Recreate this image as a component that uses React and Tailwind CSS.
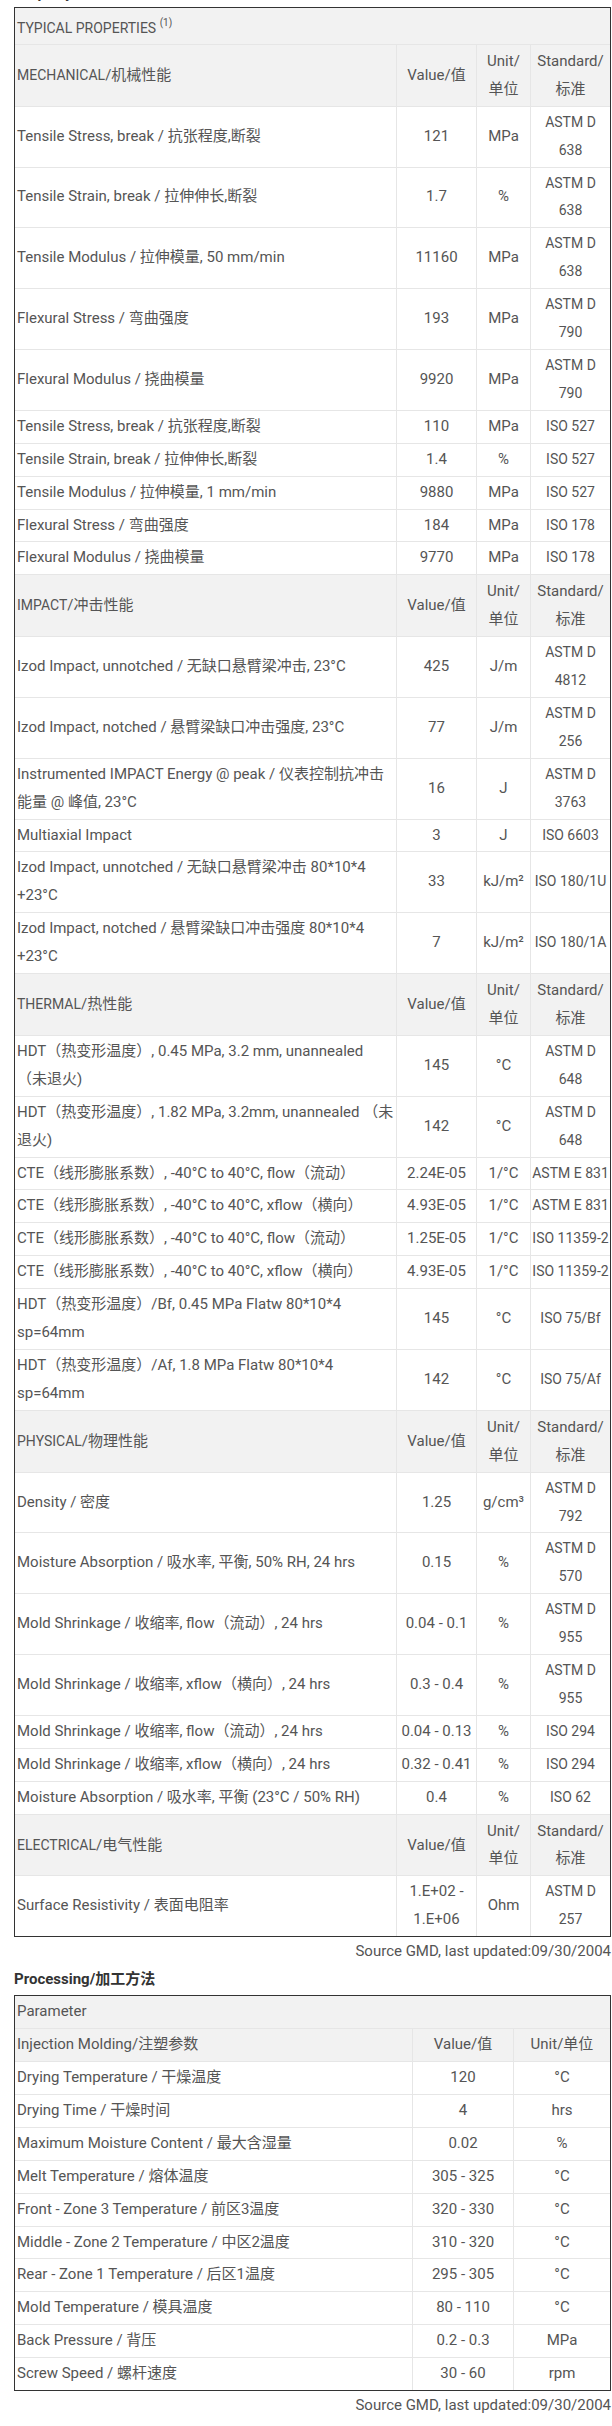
import React from "react";

const ff = "font-['Roboto','Noto_Sans_CJK_SC',sans-serif]";

const sections = [
  {
    title: "MECHANICAL",
    cn: "/机械性能",
    rows: [
      ["Tensile Stress, break / 抗张程度,断裂", "121", "MPa", "ASTM D|638"],
      ["Tensile Strain, break / 拉伸伸长,断裂", "1.7", "%", "ASTM D|638"],
      ["Tensile Modulus / 拉伸模量, 50 mm/min", "11160", "MPa", "ASTM D|638"],
      ["Flexural Stress / 弯曲强度", "193", "MPa", "ASTM D|790"],
      ["Flexural Modulus / 挠曲模量", "9920", "MPa", "ASTM D|790"],
      ["Tensile Stress, break / 抗张程度,断裂", "110", "MPa", "ISO 527"],
      ["Tensile Strain, break / 拉伸伸长,断裂", "1.4", "%", "ISO 527"],
      ["Tensile Modulus / 拉伸模量, 1 mm/min", "9880", "MPa", "ISO 527"],
      ["Flexural Stress / 弯曲强度", "184", "MPa", "ISO 178"],
      ["Flexural Modulus / 挠曲模量", "9770", "MPa", "ISO 178"],
    ],
  },
  {
    title: "IMPACT",
    cn: "/冲击性能",
    rows: [
      ["Izod Impact, unnotched / 无缺口悬臂梁冲击, 23°C", "425", "J/m", "ASTM D|4812"],
      ["Izod Impact, notched / 悬臂梁缺口冲击强度, 23°C", "77", "J/m", "ASTM D|256"],
      ["Instrumented IMPACT Energy @ peak / 仪表控制抗冲击|能量 @ 峰值, 23°C", "16", "J", "ASTM D|3763"],
      ["Multiaxial Impact", "3", "J", "ISO 6603"],
      ["Izod Impact, unnotched / 无缺口悬臂梁冲击 80*10*4|+23°C", "33", "kJ/m²", "ISO 180/1U"],
      ["Izod Impact, notched / 悬臂梁缺口冲击强度 80*10*4|+23°C", "7", "kJ/m²", "ISO 180/1A"],
    ],
  },
  {
    title: "THERMAL",
    cn: "/热性能",
    rows: [
      ["HDT（热变形温度）, 0.45 MPa, 3.2 mm, unannealed|（未退火)", "145", "°C", "ASTM D|648"],
      ["HDT（热变形温度）, 1.82 MPa, 3.2mm, unannealed （未|退火)", "142", "°C", "ASTM D|648"],
      ["CTE（线形膨胀系数）, -40°C to 40°C, flow（流动）", "2.24E-05", "1/°C", "ASTM E 831"],
      ["CTE（线形膨胀系数）, -40°C to 40°C, xflow（横向）", "4.93E-05", "1/°C", "ASTM E 831"],
      ["CTE（线形膨胀系数）, -40°C to 40°C, flow（流动）", "1.25E-05", "1/°C", "ISO 11359-2"],
      ["CTE（线形膨胀系数）, -40°C to 40°C, xflow（横向）", "4.93E-05", "1/°C", "ISO 11359-2"],
      ["HDT（热变形温度）/Bf, 0.45 MPa Flatw 80*10*4|sp=64mm", "145", "°C", "ISO 75/Bf"],
      ["HDT（热变形温度）/Af, 1.8 MPa Flatw 80*10*4|sp=64mm", "142", "°C", "ISO 75/Af"],
    ],
  },
  {
    title: "PHYSICAL",
    cn: "/物理性能",
    rows: [
      ["Density / 密度", "1.25", "g/cm³", "ASTM D|792"],
      ["Moisture Absorption / 吸水率, 平衡, 50% RH, 24 hrs", "0.15", "%", "ASTM D|570"],
      ["Mold Shrinkage / 收缩率, flow（流动）, 24 hrs", "0.04 - 0.1", "%", "ASTM D|955"],
      ["Mold Shrinkage / 收缩率, xflow（横向）, 24 hrs", "0.3 - 0.4", "%", "ASTM D|955"],
      ["Mold Shrinkage / 收缩率, flow（流动）, 24 hrs", "0.04 - 0.13", "%", "ISO 294"],
      ["Mold Shrinkage / 收缩率, xflow（横向）, 24 hrs", "0.32 - 0.41", "%", "ISO 294"],
      ["Moisture Absorption / 吸水率, 平衡 (23°C / 50% RH)", "0.4", "%", "ISO 62"],
    ],
  },
  {
    title: "ELECTRICAL",
    cn: "/电气性能",
    rows: [["Surface Resistivity / 表面电阻率", "1.E+02 -|1.E+06", "Ohm", "ASTM D|257"]],
  },
];

const processing = [
  ["Drying Temperature / 干燥温度", "120", "°C"],
  ["Drying Time / 干燥时间", "4", "hrs"],
  ["Maximum Moisture Content / 最大含湿量", "0.02", "%"],
  ["Melt Temperature / 熔体温度", "305 - 325", "°C"],
  ["Front - Zone 3 Temperature / 前区3温度", "320 - 330", "°C"],
  ["Middle - Zone 2 Temperature / 中区2温度", "310 - 320", "°C"],
  ["Rear - Zone 1 Temperature / 后区1温度", "295 - 305", "°C"],
  ["Mold Temperature / 模具温度", "80 - 110", "°C"],
  ["Back Pressure / 背压", "0.2 - 0.3", "MPa"],
  ["Screw Speed / 螺杆速度", "30 - 60", "rpm"],
];

function Lines({ t }) {
  return t.split("|").map((p, i) => (
    <React.Fragment key={i}>
      {i > 0 && <br />}
      {p}
    </React.Fragment>
  ));
}

const line = "border-[#e6e6e6]";

function Cell({ children, first, lastCol, lastRow, head, className = "" }) {
  const Tag = head ? "th" : "td";
  return (
    <Tag
      className={[
        "align-middle whitespace-nowrap font-normal",
        lastRow ? "" : "border-b",
        lastCol ? "" : "border-r",
        line,
        head ? "bg-[#f2f2f2] pt-[3px] pb-[2px]" : "py-[2px]",
        first ? "text-left pl-[2px] pr-[2px]" : "text-center px-[1px]",
        className,
      ].join(" ")}
    >
      {children}
    </Tag>
  );
}

function TypicalTable() {
  const total = sections.length;
  return (
    <div className="border border-[#333333]">
      <table className="w-full table-fixed border-separate border-spacing-0 text-[15px] leading-[27.9px] text-[#555555]">
        <colgroup>
          <col className="w-[382px]" />
          <col className="w-[80px]" />
          <col className="w-[54px]" />
          <col />
        </colgroup>
        <tbody>
          <tr>
            <td
              colSpan={4}
              className="bg-[#f2f2f2] border-b border-[#e6e6e6] pl-[2px] pt-[7px] pb-[1px] text-left text-[14px]"
            >
              TYPICAL PROPERTIES{" "}
              <sup className="text-[10px] leading-none top-[-7px]">(1)</sup>
            </td>
          </tr>
          {sections.map((s, si) => (
            <React.Fragment key={s.title}>
              <tr>
                <Cell head first>
                  <span className="text-[14px]">{s.title}</span>
                  {s.cn}
                </Cell>
                <Cell head>Value/值</Cell>
                <Cell head>
                  <Lines t="Unit/|单位" />
                </Cell>
                <Cell head lastCol>
                  <Lines t="Standard/|标准" />
                </Cell>
              </tr>
              {s.rows.map((r, ri) => {
                const lastRow = si === total - 1 && ri === s.rows.length - 1;
                return (
                  <tr key={ri}>
                    <Cell first lastRow={lastRow}>
                      <Lines t={r[0]} />
                    </Cell>
                    <Cell lastRow={lastRow}>
                      <Lines t={r[1]} />
                    </Cell>
                    <Cell lastRow={lastRow}>{r[2]}</Cell>
                    <Cell lastRow={lastRow} lastCol className="text-[14px]">
                      <Lines t={r[3]} />
                    </Cell>
                  </tr>
                );
              })}
            </React.Fragment>
          ))}
        </tbody>
      </table>
    </div>
  );
}

function ProcessingTable() {
  return (
    <div className="border border-[#333333]">
      <table className="w-full table-fixed border-separate border-spacing-0 text-[15px] leading-[27.9px] text-[#555555]">
        <colgroup>
          <col className="w-[398px]" />
          <col className="w-[101px]" />
          <col />
        </colgroup>
        <tbody>
          <tr>
            <td
              colSpan={3}
              className="bg-[#f2f2f2] border-b border-[#e6e6e6] pl-[2px] py-[2px] text-left"
            >
              Parameter
            </td>
          </tr>
          <tr>
            <Cell head first className="!pt-[2px]">
              Injection Molding/注塑参数
            </Cell>
            <Cell head className="!pt-[2px]">Value/值</Cell>
            <Cell head lastCol className="!pt-[2px]">
              Unit/单位
            </Cell>
          </tr>
          {processing.map((r, i) => {
            const lastRow = i === processing.length - 1;
            return (
              <tr key={i}>
                <Cell first lastRow={lastRow}>
                  {r[0]}
                </Cell>
                <Cell lastRow={lastRow}>{r[1]}</Cell>
                <Cell lastRow={lastRow} lastCol>
                  {r[2]}
                </Cell>
              </tr>
            );
          })}
        </tbody>
      </table>
    </div>
  );
}

export default function App() {
  return (
    <div className={`${ff} bg-white pl-[14px] pr-[1px] text-[#555555]`}>
      <h3 className="mt-[-21px] text-[15px] font-bold leading-[28px] text-[#333333]">
        Property/物性
      </h3>
      <TypicalTable />
      <div className="text-right text-[15px] leading-[28px]">
        Source GMD, last updated:09/30/2004
      </div>
      <h3 className="mb-[2px] text-[15px] font-bold leading-[28px] text-[#333333]">
        Processing/加工方法
      </h3>
      <ProcessingTable />
      <div className="text-right text-[15px] leading-[28px]">
        Source GMD, last updated:09/30/2004
      </div>
    </div>
  );
}
